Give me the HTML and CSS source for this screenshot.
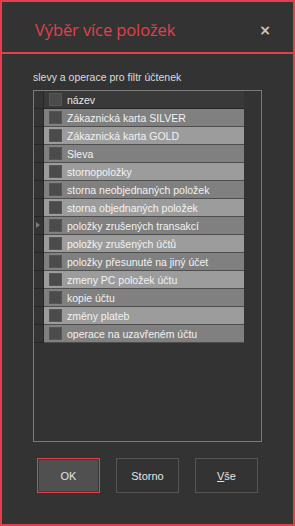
FILE: index.html
```html
<!DOCTYPE html>
<html>
<head>
<meta charset="utf-8">
<link rel="stylesheet" href="styles.css">
</head>
<body>
<div class="window">
  <div class="titlebar">
    <span class="title">Výběr více položek</span>
    <span class="close">×</span>
  </div>
  <div class="content">
    <div class="label">slevy a operace pro filtr účtenek</div>
    <div class="grid">
      <div class="row head"><div class="rh"></div><div class="cell"><span class="cb"></span><span class="txt">název</span></div></div>
      <div class="row odd"><div class="rh"></div><div class="cell"><span class="cb"></span><span class="txt">Zákaznická karta SILVER</span></div></div>
      <div class="row even"><div class="rh"></div><div class="cell"><span class="cb"></span><span class="txt">Zákaznická karta GOLD</span></div></div>
      <div class="row odd"><div class="rh"></div><div class="cell"><span class="cb"></span><span class="txt">Sleva</span></div></div>
      <div class="row even"><div class="rh"></div><div class="cell"><span class="cb"></span><span class="txt">stornopoložky</span></div></div>
      <div class="row odd"><div class="rh"></div><div class="cell"><span class="cb"></span><span class="txt">storna neobjednaných položek</span></div></div>
      <div class="row even"><div class="rh"></div><div class="cell"><span class="cb"></span><span class="txt">storna objednaných položek</span></div></div>
      <div class="row odd"><div class="rh"><span class="arrow"></span></div><div class="cell"><span class="cb"></span><span class="txt">položky zrušených transakcí</span></div></div>
      <div class="row even"><div class="rh"></div><div class="cell"><span class="cb"></span><span class="txt">položky zrušených účtů</span></div></div>
      <div class="row odd"><div class="rh"></div><div class="cell"><span class="cb"></span><span class="txt">položky přesunuté na jiný účet</span></div></div>
      <div class="row even"><div class="rh"></div><div class="cell"><span class="cb"></span><span class="txt">zmeny PC položek účtu</span></div></div>
      <div class="row odd"><div class="rh"></div><div class="cell"><span class="cb"></span><span class="txt">kopie účtu</span></div></div>
      <div class="row even"><div class="rh"></div><div class="cell"><span class="cb"></span><span class="txt">změny plateb</span></div></div>
      <div class="row odd"><div class="rh"></div><div class="cell"><span class="cb"></span><span class="txt">operace na uzavřeném účtu</span></div></div>
    </div>
    <div class="buttons">
      <div class="btn ok">OK</div>
      <div class="btn">Storno</div>
      <div class="btn"><u>V</u>še</div>
    </div>
  </div>
</div>
</body>
</html>
```
FILE: styles.css
```css
html, body {
  margin: 0;
  padding: 0;
  background: #333333;
}
body {
  font-family: "Liberation Sans", "DejaVu Sans", sans-serif;
}
.window {
  width: 295px;
  height: 526px;
  box-sizing: border-box;
  border: 2px solid #e0414b;
  background: #333333;
  display: flex;
  flex-direction: column;
}
.titlebar {
  height: 50px;
  border-bottom: 2px solid #e0414b;
  display: flex;
  align-items: center;
  justify-content: space-between;
  padding: 0 22px 0 33px;
}
.title {
  color: #e0414b;
  font-family: "Open Sans", sans-serif;
  font-size: 16.5px;
  letter-spacing: -0.1px;
  margin-top: 4px;
}
.close {
  color: #c8c8c8;
  font-family: "DejaVu Sans", sans-serif;
  font-weight: bold;
  font-size: 14px;
  margin-top: 5px;
}
.content {
  padding-left: 31px;
  display: flex;
  flex-direction: column;
}
.label {
  margin-top: 17px;
  height: 19px;
  color: #dcdcdc;
  font-size: 10.5px;
}
.grid {
  width: 227px;
  height: 350px;
  border: 1px solid #7a7a7a;
  background: #333333;
  display: flex;
  flex-direction: column;
}
.row {
  display: flex;
  height: 18px;
}
.rh {
  width: 9px;
  height: 17px;
  background: #343434;
  border-right: 1px solid #262626;
  border-bottom: 1px solid #262626;
  position: relative;
}
.arrow {
  position: absolute;
  left: 2px;
  top: 5px;
  width: 0;
  height: 0;
  border-top: 3.5px solid transparent;
  border-bottom: 3.5px solid transparent;
  border-left: 4px solid #7a7a7a;
}
.cell {
  width: 200px;
  height: 17px;
  border-bottom: 1px solid #4e4e4e;
  display: flex;
  align-items: center;
  box-sizing: content-box;
}
.head .cell {
  background: #393939;
  border-bottom-color: #262626;
}
.odd .cell { background: #808080; }
.even .cell { background: #9c9c9c; }
.cb {
  width: 11px;
  height: 11px;
  margin-left: 5px;
  background: #4b4b4b;
  border: 1px solid #565656;
  box-sizing: content-box;
  flex: none;
}
.txt {
  margin-left: 5px;
  color: #f2f2f2;
  font-size: 10.5px;
  white-space: nowrap;
}
.head .txt { color: #e6e6e6; }
.buttons {
  display: flex;
  gap: 16px;
  margin-top: 16px;
  padding-left: 4px;
}
.btn {
  width: 61px;
  height: 33px;
  border: 1px solid #555555;
  background: #333333;
  color: #e4e4e4;
  font-size: 11px;
  display: flex;
  align-items: center;
  justify-content: center;
}
.btn.ok {
  border-color: #e0414b;
  background: #505050;
  box-shadow: inset 0 0 0 1px #3a3a3a;
}
```
